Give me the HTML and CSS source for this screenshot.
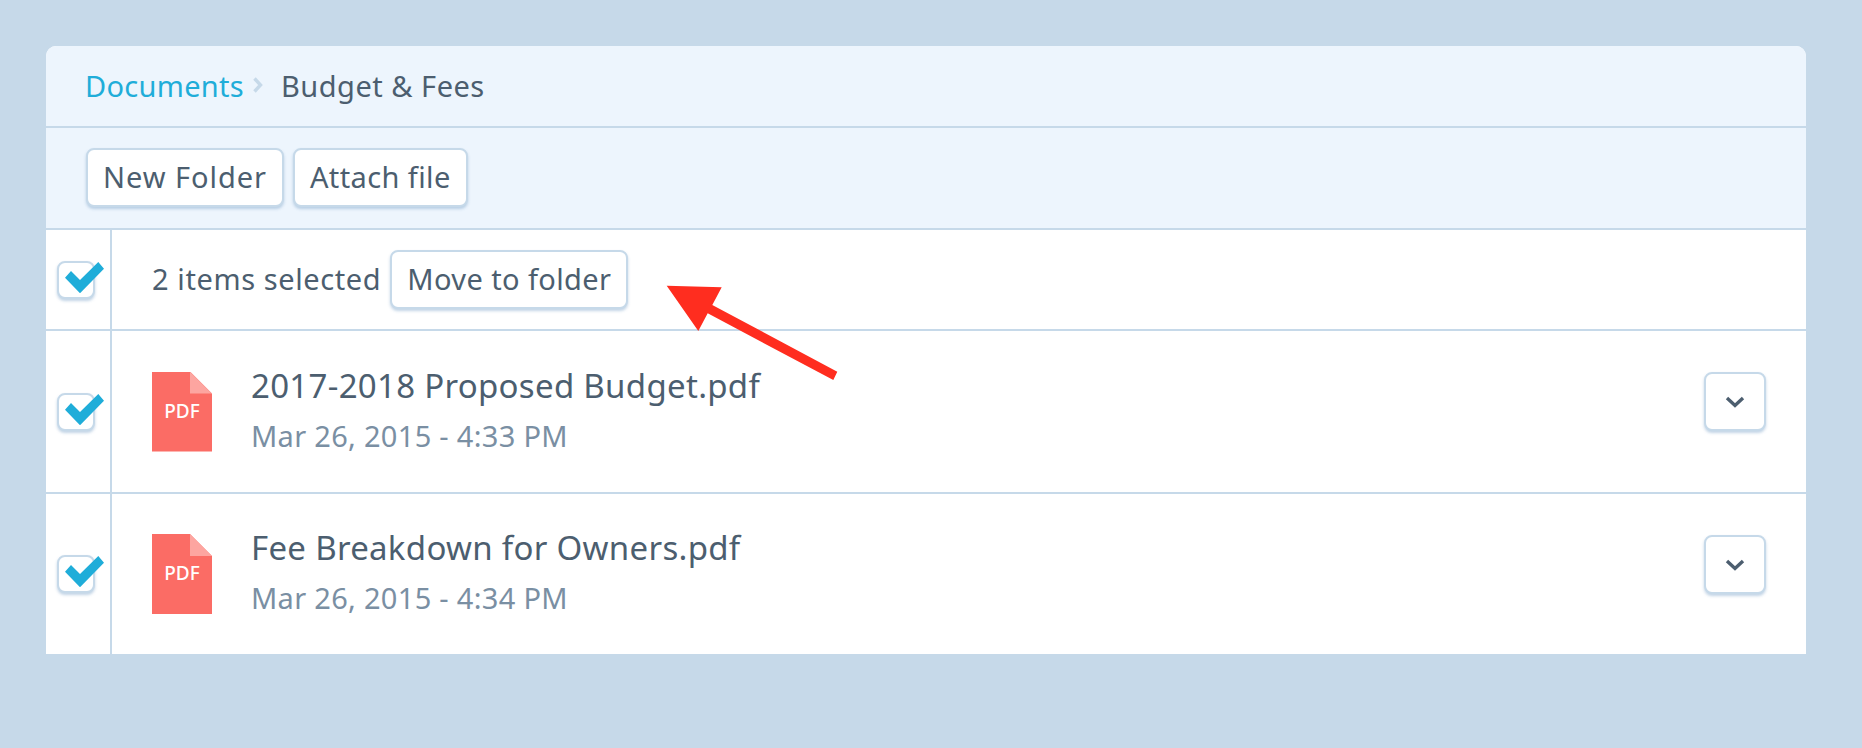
FILE: index.html
```html
<!DOCTYPE html>
<html lang="en">
<head>
    <meta charset="UTF-8">
    <title>Budget &amp; Fees</title>
    <link rel="stylesheet" href="styles.css">
</head>
<body>

<div class="card">
    <div class="crumbs">
        <a class="crumb-link">Documents</a>
        <svg class="crumb-sep" width="10" height="16" viewBox="0 0 10 16"><path d="M1.5 1.5 L7.5 8 L1.5 14.5" fill="none" stroke="#c6d9e9" stroke-width="3.4"/></svg>
        <span class="crumb-current">Budget &amp; Fees</span>
    </div>

    <div class="toolbar">
        <button class="btn">New Folder</button>
        <button class="btn">Attach file</button>
    </div>

    <div class="row row-select">
        <div class="check-col">
            <span class="check">
                <svg class="tick" width="39" height="32" viewBox="0 0 39 32"><path d="M0 15.7 L6 9 L15 18 L33.3 0 L39 6.7 L15 31.3 Z" fill="#1fadd9"/></svg>
            </span>
        </div>
        <div class="select-body">
            <span class="select-count">2 items selected</span>
            <button class="btn">Move to folder</button>
        </div>
    </div>

    <div class="row row-file">
        <div class="check-col">
            <span class="check">
                <svg class="tick" width="39" height="32" viewBox="0 0 39 32"><path d="M0 15.7 L6 9 L15 18 L33.3 0 L39 6.7 L15 31.3 Z" fill="#1fadd9"/></svg>
            </span>
        </div>
        <div class="file-body">
            <div class="pdf">
                <span class="pdf-fold"></span>
                <span class="pdf-label">PDF</span>
            </div>
            <div class="file-info">
                <div class="file-name">2017-2018 Proposed Budget.pdf</div>
                <div class="file-date">Mar 26, 2015 - 4:33 PM</div>
            </div>
            <button class="btn-more">
                <svg width="20" height="12" viewBox="0 0 20 12"><path d="M2 2 L10 9.5 L18 2" fill="none" stroke="#4c5e6f" stroke-width="3.4"/></svg>
            </button>
        </div>
    </div>

    <div class="row row-file">
        <div class="check-col">
            <span class="check">
                <svg class="tick" width="39" height="32" viewBox="0 0 39 32"><path d="M0 15.7 L6 9 L15 18 L33.3 0 L39 6.7 L15 31.3 Z" fill="#1fadd9"/></svg>
            </span>
        </div>
        <div class="file-body">
            <div class="pdf">
                <span class="pdf-fold"></span>
                <span class="pdf-label">PDF</span>
            </div>
            <div class="file-info">
                <div class="file-name">Fee Breakdown for Owners.pdf</div>
                <div class="file-date">Mar 26, 2015 - 4:34 PM</div>
            </div>
            <button class="btn-more">
                <svg width="20" height="12" viewBox="0 0 20 12"><path d="M2 2 L10 9.5 L18 2" fill="none" stroke="#4c5e6f" stroke-width="3.4"/></svg>
            </button>
        </div>
    </div>

    <!-- annotation arrow drawn over the list -->
    <svg class="arrow" width="180" height="110" viewBox="0 0 180 110"><path d="M0.7 0.7 L55.7 2.3 L46.3 20 L171.3 86.7 L167.3 95 L41.7 28.3 L32.3 46 Z" fill="#ff2d1f"/></svg>
</div>

</body>
</html>
```

FILE: styles.css
```css
body {
    font-family: "Noto Sans", Lato, sans-serif;
    background-color: #c6d9e9;
    color: #4c5e6f;
    margin: 0;
    height: 748px;
    overflow: hidden;
}
.card {
    position: relative;
    margin: 46px 56px 0 46px;
    background-color: #fff;
    border-radius: 10px 10px 0 0;
    overflow: hidden;
}
.crumbs {
    display: flex;
    align-items: center;
    height: 78px;
    padding: 0 39px 2px;
    background-color: #edf5fd;
    border-bottom: 2px solid #c6d9e9;
    font-size: 29px;
}
.crumb-link {
    color: #1fadd9;
    letter-spacing: 0.3px;
}
.crumb-current {
    letter-spacing: 0.5px;
}
.crumb-sep {
    margin: 0 18px 0 9px;
}
.toolbar {
    display: flex;
    align-items: center;
    gap: 9px;
    height: 99px;
    padding: 0 40px 1px;
    background-color: #edf5fd;
    border-bottom: 2px solid #c6d9e9;
}
.btn {
    font-family: inherit;
    font-size: 29px;
    letter-spacing: 0.4px;
    color: #4c5e6f;
    height: 59px;
    padding: 0 15px 2px;
    background-color: #fff;
    border: 2px solid #c6d9e9;
    border-radius: 8px;
    box-shadow: 0 2px 3px rgba(120, 160, 200, 0.45);
}
.toolbar .btn:first-child {
    letter-spacing: 0.95px;
}
.row {
    display: flex;
    border-bottom: 2px solid #c6d9e9;
}
.row-select {
    height: 99px;
}
.row-file {
    height: 161px;
}
.row:last-of-type {
    height: 160px;
    border-bottom: none;
}
.check-col {
    width: 64px;
    flex: none;
    display: flex;
    align-items: center;
    justify-content: center;
    border-right: 2px solid #c6d9e9;
}
.check {
    position: relative;
    width: 38px;
    height: 38px;
    margin-right: 4px;
    background-color: #fff;
    border: 2px solid #c6d9e9;
    border-radius: 8px;
    box-shadow: 0 2px 3px rgba(120, 160, 200, 0.45);
    box-sizing: border-box;
}
.tick {
    position: absolute;
    left: 6px;
    top: -1px;
}
.select-body {
    display: flex;
    align-items: center;
    gap: 9px;
    padding-left: 40px;
    font-size: 29px;
}
.select-count {
    letter-spacing: 0.6px;
    padding-bottom: 2px;
}
.file-body {
    flex: 1;
    display: flex;
    align-items: center;
    padding: 0 40px;
}
.pdf {
    position: relative;
    width: 60px;
    height: 80px;
    background-color: #fb6c65;
    clip-path: polygon(0 0, 38px 0, 60px 22px, 60px 80px, 0 80px);
    display: flex;
    align-items: center;
    justify-content: center;
}
.pdf-fold {
    position: absolute;
    top: 0;
    right: 0;
    width: 22px;
    height: 22px;
    background-color: #fda5a0;
    clip-path: polygon(0 0, 100% 100%, 0 100%);
}
.pdf-label {
    color: #fff;
    font-size: 19px;
    font-weight: 500;
    margin-top: -2px;
}
.file-info {
    flex: 1;
    margin-left: 39px;
    padding-bottom: 2px;
}
.file-name {
    font-size: 33px;
    line-height: 40px;
    letter-spacing: 0.3px;
}
.file-date {
    font-size: 29px;
    line-height: 40px;
    letter-spacing: 0.3px;
    color: #7a8fa3;
    margin-top: 10px;
}
.btn-more {
    align-self: flex-start;
    margin-top: 41px;
    width: 62px;
    height: 59px;
    display: flex;
    align-items: center;
    justify-content: center;
    background-color: #fff;
    border: 2px solid #c6d9e9;
    border-radius: 8px;
    box-shadow: 0 2px 3px rgba(120, 160, 200, 0.45);
}
.arrow {
    position: absolute;
    left: 620px;
    top: 239px;
}
```
